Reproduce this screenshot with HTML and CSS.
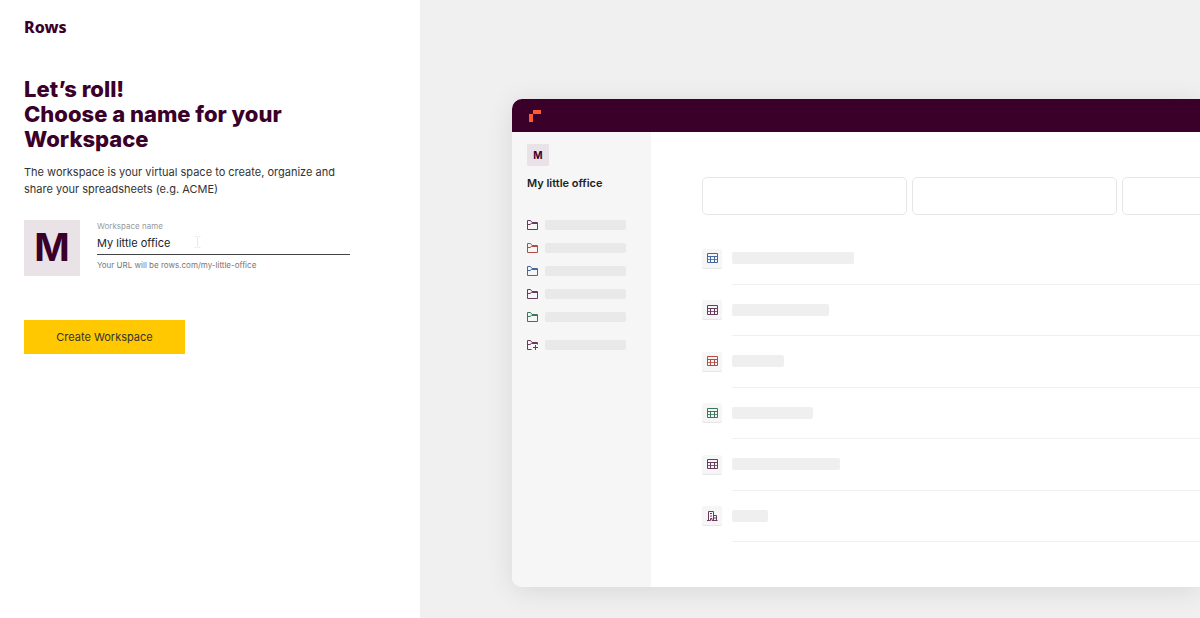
FILE: index.html
```html
<!DOCTYPE html>
<html lang="en">
<head>
    <meta charset="UTF-8">
    <meta name="viewport" content="width=device-width, initial-scale=1.0">
    <title>Rows - Name your Workspace</title>
    <link rel="stylesheet" href="styles.css">
</head>
<body>
    <!-- shared icons -->
    <svg class="sprite" aria-hidden="true">
        <symbol id="folder" viewBox="0 0 11 10">
            <path d="M.5 9.5V.5H3.5L5 2.5H10.5V9.5H.5M.5 4.5H3L4.5 3.5H10.5" fill="none" stroke="currentColor"/>
        </symbol>
        <symbol id="folder-add" viewBox="0 0 11 10">
            <path d="M4.5 9.5H.5V.5H3.5L5 2.5H10.5V4.5M.5 4.5H3L4.5 3.5H10.5M6 7.5H11M8.5 5V10" fill="none" stroke="currentColor"/>
        </symbol>
        <symbol id="table" viewBox="0 0 11 10">
            <path d="M.5 .5H10.5V9.5H.5ZM.5 3.5H10.5M3.5 3.5V9.5M7.5 3.5V9.5" fill="none" stroke="currentColor"/>
            <path d="M.5 6.5H10.5" fill="none" stroke="currentColor" opacity=".8"/>
        </symbol>
        <symbol id="building" viewBox="0 0 11 10">
            <path d="M1.5 9.5V.5H6.5V9.5M6.5 4.5H9.5V9.5M0 9.5H3.5V7.5H5V9.5H10.5M3 2.5H5M3 5H5M8 6V8" fill="none" stroke="currentColor"/>
        </symbol>
    </svg>

    <div class="page">
        <main class="setup">
            <div class="logo">Rows</div>
            <h1>Let’s roll!<br>Choose a name for your Workspace</h1>
            <p class="intro">The workspace is your virtual space to create, organize and share your spreadsheets (e.g. ACME)</p>

            <form class="setup-form">
                <div class="name-row">
                    <div class="avatar">M</div>
                    <div class="field">
                        <label for="workspace">Workspace name</label>
                        <input type="text" id="workspace" value="My little office">
                        <svg class="caret" viewBox="0 0 7 12" aria-hidden="true"><path d="M.5 .5H2.5L3.5 1.5L4.5 .5H6.5M3.5 1.5V10.5M.5 11.5H2.5L3.5 10.5L4.5 11.5H6.5" fill="none" stroke="currentColor"/></svg>
                        <div class="hint">Your URL will be rows.com/my-little-office</div>
                    </div>
                </div>
                <button type="button" class="create">Create Workspace</button>
            </form>
        </main>

        <section class="preview">
            <div class="window">
                <div class="topbar">
                    <svg class="mark" viewBox="0 0 12 12"><path d="M4 0H12V4H4ZM0 4H4V12H0Z" fill="#ff5a36"/></svg>
                </div>
                <div class="window-body">
                    <aside class="sidebar">
                        <div class="badge">M</div>
                        <div class="workspace-title">My little office</div>
                        <ul class="folders">
                            <li class="plum"><svg><use href="#folder"/></svg><span></span></li>
                            <li class="red"><svg><use href="#folder"/></svg><span></span></li>
                            <li class="blue"><svg><use href="#folder"/></svg><span></span></li>
                            <li class="plum"><svg><use href="#folder"/></svg><span></span></li>
                            <li class="green"><svg><use href="#folder"/></svg><span></span></li>
                            <li class="plum add"><svg><use href="#folder-add"/></svg><span></span></li>
                        </ul>
                    </aside>
                    <div class="content">
                        <div class="cards">
                            <div class="card"></div>
                            <div class="card"></div>
                            <div class="card"></div>
                        </div>
                        <ul class="files">
                            <li class="blue"><div class="tile"><svg><use href="#table"/></svg></div><div class="line"><span style="width: 122px"></span></div></li>
                            <li class="plum"><div class="tile"><svg><use href="#table"/></svg></div><div class="line"><span style="width: 97px"></span></div></li>
                            <li class="red"><div class="tile"><svg><use href="#table"/></svg></div><div class="line"><span style="width: 52px"></span></div></li>
                            <li class="green"><div class="tile"><svg><use href="#table"/></svg></div><div class="line"><span style="width: 81px"></span></div></li>
                            <li class="plum"><div class="tile"><svg><use href="#table"/></svg></div><div class="line"><span style="width: 108px"></span></div></li>
                            <li class="plum"><div class="tile"><svg><use href="#building"/></svg></div><div class="line"><span style="width: 36px"></span></div></li>
                        </ul>
                    </div>
                </div>
            </div>
        </section>
    </div>
</body>
</html>
```
FILE: styles.css
```css
* {
    box-sizing: border-box;
}

body {
    margin: 0;
    font-family: Inter, "Liberation Sans", sans-serif;
    font-size: 11px;
    color: #333;
    background-color: #fff;
}

ul {
    list-style: none;
    margin: 0;
    padding: 0;
}

.sprite {
    display: none;
}

.page {
    display: flex;
    min-height: 100vh;
}

/* left column */
.setup {
    flex: 0 0 35%;
    padding: 18px 70px 24px 24px;
}

.logo {
    font-family: "Noto Sans", sans-serif;
    font-size: 16px;
    line-height: 18px;
    font-weight: 800;
    color: #3b0029;
}

h1 {
    margin: 41px 0 12px;
    font-size: 22px;
    line-height: 25px;
    font-weight: 800;
    color: #3b0029;
}

.intro {
    margin: 0 0 22px;
    line-height: 17px;
}

.name-row {
    display: flex;
    gap: 17px;
}

.avatar {
    flex: none;
    width: 56px;
    height: 56px;
    border-radius: 1px;
    background-color: #e9e2e7;
    color: #3b0029;
    font-size: 38px;
    line-height: 54px;
    font-weight: 700;
    text-align: center;
}

.field {
    position: relative;
    flex: 1;
}

.field label {
    display: block;
    font-size: 8px;
    line-height: 12px;
    color: #999;
}

.field input {
    display: block;
    width: 100%;
    height: 23px;
    padding: 0;
    border: 0;
    border-bottom: 1px solid #444;
    outline: none;
    background: none;
    font: inherit;
    color: #222;
}

.caret {
    position: absolute;
    left: 97px;
    top: 16px;
    width: 7px;
    height: 12px;
    color: #e8e8e8;
}

.hint {
    margin-top: 4px;
    font-size: 8px;
    line-height: 12px;
    color: #777;
}

.create {
    width: 161px;
    height: 34px;
    margin-top: 44px;
    padding: 0;
    border: 0;
    background-color: #ffc800;
    font: inherit;
    color: #333;
    cursor: pointer;
}

/* app preview */
.preview {
    flex: 1;
    display: flex;
    min-width: 0;
    padding: 99px 0 31px 92px;
    background-color: #f0f0f0;
    overflow: hidden;
}

.window {
    flex: 1;
    display: flex;
    flex-direction: column;
    min-width: 0;
    border-radius: 10px 0 0 10px;
    background-color: #fff;
    box-shadow: 0 4px 28px rgba(0, 0, 0, 0.1);
    overflow: hidden;
}

.topbar {
    display: flex;
    align-items: center;
    height: 33px;
    padding-left: 17px;
    background-color: #3b0029;
}

.mark {
    width: 12px;
    height: 12px;
}

.window-body {
    flex: 1;
    display: flex;
}

.sidebar {
    flex: 0 0 139px;
    padding: 12px 15px;
    background-color: #f6f6f6;
}

.badge {
    width: 22px;
    height: 22px;
    border-radius: 1px;
    background-color: #e9e2e7;
    color: #3b0029;
    font-size: 10px;
    line-height: 22px;
    font-weight: 700;
    text-align: center;
}

.workspace-title {
    margin-top: 9px;
    line-height: 17px;
    font-weight: 600;
    color: #222;
    white-space: nowrap;
}

.folders {
    display: grid;
    gap: 13px;
    margin-top: 28px;
}

.folders li {
    display: flex;
    align-items: center;
    gap: 7px;
    height: 10px;
}

.folders svg {
    width: 11px;
    height: 10px;
}

.folders span {
    width: 81px;
    height: 10px;
    border-radius: 2px;
    background-color: #e9e9e9;
}

.folders .add {
    margin-top: 5px;
}

.content {
    flex: 1;
    display: flex;
    flex-direction: column;
    gap: 18px;
    min-width: 0;
    padding: 45px 0 45px 51px;
}

.cards {
    display: flex;
    gap: 5px;
    overflow: hidden;
}

.card {
    flex: 0 0 205px;
    height: 38px;
    border: 1px solid #e6e6e6;
    border-radius: 5px;
}

.files {
    flex: 1;
    display: flex;
    flex-direction: column;
}

.files li {
    flex: 1;
    display: flex;
    align-items: center;
    gap: 10px;
}

.tile {
    display: flex;
    align-items: center;
    justify-content: center;
    width: 20px;
    height: 20px;
    border-bottom: 1px solid #e6e6e6;
    border-radius: 2px;
    background-color: #f6f6f6;
}

.tile svg {
    width: 11px;
    height: 10px;
}

.line {
    flex: 1;
    align-self: stretch;
    display: flex;
    align-items: center;
    border-bottom: 1px solid #f0f0f0;
}

.line span {
    height: 12px;
    border-radius: 2px;
    background-color: #efefef;
}

.plum {
    color: #6b3a5e;
}

.red {
    color: #b34a45;
}

.blue {
    color: #4668a0;
}

.green {
    color: #37795a;
}
```
